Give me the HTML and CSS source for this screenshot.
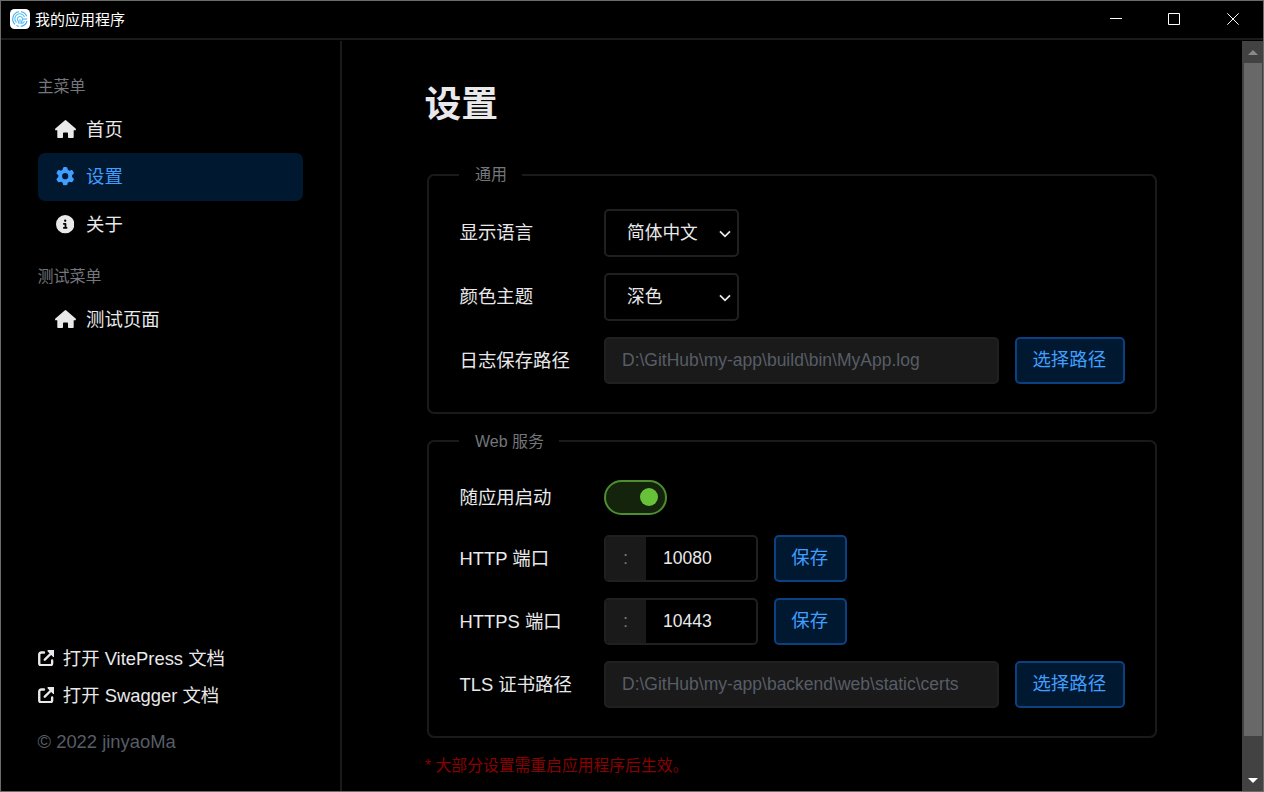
FILE: index.html
```html
<!DOCTYPE html>
<html lang="zh-CN">
<head>
<meta charset="utf-8">
<title>我的应用程序</title>
<link rel="stylesheet" href="styles.css">
</head>
<body>
<svg class="defs" width="0" height="0" aria-hidden="true">
  <symbol id="home" viewBox="0 0 21 18"><path fill="currentColor" d="M9.700.4a1.200 1.200 0 0 1 1.600 0l9.300 8.200c.7.700.3 1.700-.6 1.700h-1.300V17c0 .6-.4 1-1 1h-3.900c-.5 0-.8-.3-.8-.8v-3.600c0-.7-.4-1.100-1.100-1.100H9.100c-.7 0-1.100.4-1.100 1.100v3.600c0 .5-.3.8-.8.8H3.300c-.6 0-1-.4-1-1v-6.700H1c-.9 0-1.300-1-.6-1.700z"/></symbol>
  <symbol id="gear" viewBox="0 0 512 512"><path fill="currentColor" d="M495.900 166.600c3.200 8.700.5 18.400-6.400 24.600l-43.300 39.400c1.100 8.300 1.700 16.800 1.700 25.400s-.6 17.100-1.700 25.400l43.300 39.400c6.900 6.200 9.600 15.900 6.400 24.600-4.400 11.900-9.700 23.300-15.800 34.300l-4.700 8.100c-6.600 11-14 21.400-22.100 31.200-5.900 7.200-15.700 9.600-24.500 6.800l-55.700-17.700c-13.400 10.300-28.200 18.900-44 25.400l-12.500 57.100c-2 9.100-9 16.300-18.200 17.800-13.800 2.300-28 3.500-42.500 3.500s-28.700-1.200-42.500-3.500c-9.200-1.500-16.200-8.700-18.200-17.800l-12.500-57.100c-15.800-6.500-30.600-15.100-44-25.400l-55.600 17.800c-8.800 2.800-18.600.3-24.500-6.800-8.100-9.800-15.500-20.200-22.100-31.200l-4.700-8.100c-6.100-11-11.400-22.400-15.800-34.300-3.200-8.700-.5-18.400 6.400-24.600l43.300-39.400C64.600 273.100 64 264.600 64 256s.6-17.100 1.700-25.400l-43.300-39.400c-6.900-6.200-9.600-15.900-6.400-24.600 4.400-11.900 9.700-23.300 15.800-34.300l4.700-8.100c6.600-11 14-21.400 22.100-31.200 5.900-7.200 15.700-9.600 24.500-6.800l55.700 17.700c13.400-10.300 28.200-18.900 44-25.400l12.500-57.100c2-9.100 9-16.300 18.200-17.800C227.300 1.200 241.500 0 256 0s28.700 1.200 42.500 3.500c9.200 1.500 16.200 8.700 18.200 17.800l12.500 57.100c15.800 6.500 30.600 15.100 44 25.400l55.700-17.700c8.800-2.800 18.600-.3 24.500 6.800 8.100 9.800 15.500 20.200 22.100 31.200l4.700 8.100c6.100 11 11.400 22.400 15.800 34.300zM256 342a86 86 0 1 0 0-172 86 86 0 1 0 0 172z"/></symbol>
  <symbol id="info" viewBox="0 0 512 512"><path fill="currentColor" d="M256 512a256 256 0 1 0 0-512 256 256 0 1 0 0 512zM216 336h24v-64h-24c-13.300 0-24-10.700-24-24s10.700-24 24-24h48c13.300 0 24 10.700 24 24v88h8c13.300 0 24 10.700 24 24s-10.700 24-24 24h-80c-13.300 0-24-10.700-24-24s10.700-24 24-24zm40-208a32 32 0 1 1 0 64 32 32 0 1 1 0-64z"/></symbol>
  <symbol id="external" viewBox="0 0 16 16"><path fill="none" stroke="currentColor" stroke-width="2.300" stroke-linecap="round" stroke-linejoin="round" d="M5.800 2.400H3.200c-1.200 0-2 .8-2 2v8.400c0 1.200.8 2 2 2h8.500c1.200 0 2-.8 2-2V10.200M6.600 9.400l6-6"/><path fill="currentColor" d="M10 0H15.200c.5 0 .8.3.8.8v5.200c0 .8-.9 1.200-1.500.6L9.400 1.500C8.800.9 9.200 0 10 0z"/></symbol>
  <symbol id="chevron" viewBox="0 0 12 8"><path fill="none" stroke="currentColor" stroke-width="1.800" d="M1 1.300l5 5 5-5"/></symbol>
</svg>
<div class="window">
  <header class="titlebar">
    <svg class="logo" viewBox="0 0 20 20"><rect width="20" height="20" rx="4.500" fill="#fff"/><g fill="none" stroke-width="1.100"><path stroke="#4aa6f8" d="M5 15.300A7.300 7.300 0 0 1 9 2.800M11 2.800a7.300 7.300 0 0 1 5.700 4.500M17.200 10H13M17 12a7.300 7.300 0 0 1-6.500 5.300M8.800 17.200a7 7 0 0 1-2.300-.8"/><path stroke="#45cdf3" d="M6.500 13.500A5 5 0 1 1 14.500 8M14.500 12.300a5 5 0 0 1-3 2.400"/><path stroke="#62bdf8" d="M8.400 14.500v-2.200a2.700 2.700 0 1 1 3.200 0v2.200M10 10v5"/></g></svg>
    <span class="app-name">我的应用程序</span>
    <div class="window-controls">
      <svg viewBox="0 0 14 14"><path d="M1 6.500h12"/></svg>
      <svg viewBox="0 0 14 14"><path d="M1.500 1.500h11v11h-11z"/></svg>
      <svg viewBox="0 0 14 14"><path d="M1.300 1.300l11.400 11.400M12.700 1.300L1.300 12.700"/></svg>
    </div>
  </header>
  <div class="body">
    <aside class="sidebar">
      <div class="menu-title">主菜单</div>
      <nav class="menu">
        <a class="item"><svg class="home"><use href="#home"/></svg>首页</a>
        <a class="item active"><svg><use href="#gear"/></svg>设置</a>
        <a class="item"><svg><use href="#info"/></svg>关于</a>
      </nav>
      <div class="menu-title second">测试菜单</div>
      <nav class="menu">
        <a class="item"><svg class="home"><use href="#home"/></svg>测试页面</a>
      </nav>
      <footer class="links">
        <a class="link"><svg><use href="#external"/></svg>打开 VitePress 文档</a>
        <a class="link"><svg><use href="#external"/></svg>打开 Swagger 文档</a>
        <div class="copyright">© 2022 jinyaoMa</div>
      </footer>
    </aside>
    <main class="content">
      <h1>设置</h1>
      <fieldset class="group">
        <legend>通用</legend>
        <div class="rows">
          <div class="row tall"><label>显示语言</label><div class="select">简体中文<svg><use href="#chevron"/></svg></div></div>
          <div class="row tall"><label>颜色主题</label><div class="select">深色<svg><use href="#chevron"/></svg></div></div>
          <div class="row"><label>日志保存路径</label><div class="path">D:\GitHub\my-app\build\bin\MyApp.log</div><button class="wide">选择路径</button></div>
        </div>
      </fieldset>
      <fieldset class="group">
        <legend class="web">Web 服务</legend>
        <div class="rows">
          <div class="row switch-row"><label>随应用启动</label><div class="switch"><span class="knob"></span></div></div>
          <div class="row"><label>HTTP 端口</label><div class="port"><span class="prefix">:</span><span class="value">10080</span></div><button>保存</button></div>
          <div class="row"><label>HTTPS 端口</label><div class="port"><span class="prefix">:</span><span class="value">10443</span></div><button>保存</button></div>
          <div class="row"><label>TLS 证书路径</label><div class="path">D:\GitHub\my-app\backend\web\static\certs</div><button class="wide">选择路径</button></div>
        </div>
      </fieldset>
      <p class="note">* 大部分设置需重启应用程序后生效。</p>
    </main>
    <div class="scrollbar">
      <svg class="arrow up" viewBox="0 0 10 5"><path d="M0 5l5-5 5 5z"/></svg>
      <div class="thumb"></div>
      <svg class="arrow down" viewBox="0 0 10 5"><path d="M0 0h10L5 5z"/></svg>
    </div>
  </div>
</div>
</body>
</html>
```
FILE: styles.css
```css
* { box-sizing: border-box; }
body {
  margin: 0;
  background: #000;
  color: #e9e9eb;
  font: 18.4px/24px "Liberation Sans", "Noto Sans CJK SC", sans-serif;
  overflow: hidden;
}
.defs { display: block; }
.window {
  width: 1264px;
  height: 792px;
  border: 1px solid #6b6b6b;
  display: flex;
  flex-direction: column;
}
.titlebar {
  height: 39px;
  flex: none;
  border-bottom: 2px solid #1a1a1a;
  display: flex;
  align-items: center;
  padding-left: 9px;
}
.logo { width: 20px; height: 20px; margin-top: -1px; }
.app-name { font-size: 15px; margin-left: 5px; color: #fff; }
.window-controls { margin: -1px 0 0 auto; display: flex; padding-right: 23px; }
.window-controls svg { width: 14px; height: 14px; margin-left: 45px; fill: none; stroke: #fff; stroke-width: 1; }
.window-controls svg:nth-child(2) { margin-left: 44px; }
.body { flex: 1; display: flex; min-height: 0; padding-top: 1px; }
.sidebar {
  width: 341px;
  flex: none;
  border-right: 2px solid #1a1a1a;
  padding: 34px 37px 37px 36.500px;
  display: flex;
  flex-direction: column;
}
.menu-title { font-size: 16px; color: #73767a; }
.menu { margin: 6.500px 0 0 .5px; display: flex; flex-direction: column; }
.menu-title.second { margin-top: 17px; }
.item {
  height: 47.600px;
  display: flex;
  align-items: center;
  gap: 12px;
  padding: 1px 0 0 17.700px;
  border-radius: 7px;
}
.item svg { width: 18.400px; height: 18.400px; margin-top: -1px; }
.item svg.home { width: 21px; height: 18px; margin: -2px -1.500px 0 -1.100px; }
.item.active { color: #409eff; background: #001930; }
.item.active svg { margin-top: -2px; }
.links { margin-top: auto; display: flex; flex-direction: column; }
.link { height: 37px; display: flex; align-items: center; gap: 8.800px; }
.link svg { width: 16.500px; height: 16.500px; margin-top: -1px; }
.copyright { color: #575d66; margin-top: 16px; }
.content { flex: 1; padding: 37px 0 0 82.500px; }
h1 { margin: 0 0 31px; font-size: 36.800px; line-height: 54px; }
.group {
  width: 730px;
  margin: 0 0 15px 2.500px;
  border: 2px solid #1a1a1a;
  border-radius: 7px;
  padding: 0 30px 28px;
}
legend { font-size: 16px; color: #73767a; padding: 0 15px 0 16px; }
legend.web { line-height: 22px; padding-top: 2px; }
.rows { padding-top: 22px; display: flex; flex-direction: column; gap: 16px; }
.row { height: 47px; display: flex; align-items: center; }
.row.tall { height: 48px; }
.row.switch-row { height: 44px; }
.switch-row label { padding-top: 2px; }
label { width: 144.500px; margin-left: .5px; flex: none; white-space: nowrap; }
.select {
  width: 135px;
  height: 48px;
  border: 2px solid #202020;
  border-radius: 5px;
  padding: 0 6px 0 21px;
  display: flex;
  align-items: center;
  justify-content: space-between;
  font-size: 17.700px;
}
.select svg { width: 12px; height: 8px; margin-top: 1px; }
.path {
  width: 395px;
  height: 47px;
  border: 2px solid #202020;
  border-radius: 5px;
  background: #1a1a1a;
  color: #575d66;
  padding: 9px 16px;
  font-size: 17.500px;
}
button {
  width: 73px;
  height: 47px;
  margin-left: 16px;
  padding: 0 1.500px 1px 0;
  border: 2px solid #0b4180;
  border-radius: 5px;
  background: #001930;
  color: #409eff;
  font: inherit;
}
button.wide { width: 110px; }
.switch {
  width: 63px;
  height: 35px;
  border: 2px solid #4e8e2f;
  border-radius: 18px;
  background: #14230b;
  display: flex;
  align-items: center;
  justify-content: flex-end;
  padding-right: 7px;
}
.knob { width: 18px; height: 18px; border-radius: 50%; background: #67c23a; }
.port {
  width: 154px;
  height: 47px;
  border: 2px solid #202020;
  border-radius: 5px;
  display: flex;
  overflow: hidden;
}
.prefix { width: 40px; background: #1a1a1a; color: #73767a; text-align: center; line-height: 42px; padding-right: 1px; }
.value { padding-left: 17px; line-height: 42px; font-size: 17.500px; }
.note { margin: 0; padding: 1px 0 0 .5px; font-size: 15.800px; color: #8b0000; }
.scrollbar {
  width: 21px;
  background: #424242;
  display: flex;
  flex-direction: column;
  align-items: center;
}
.arrow { width: 10px; height: 5px; flex: none; fill: #8a8a8a; margin: 9px 0 8px; }
.thumb { width: 18px; height: 673px; background: #686868; }
.arrow.down { fill: #fff; margin: auto 0 8px; }
```
